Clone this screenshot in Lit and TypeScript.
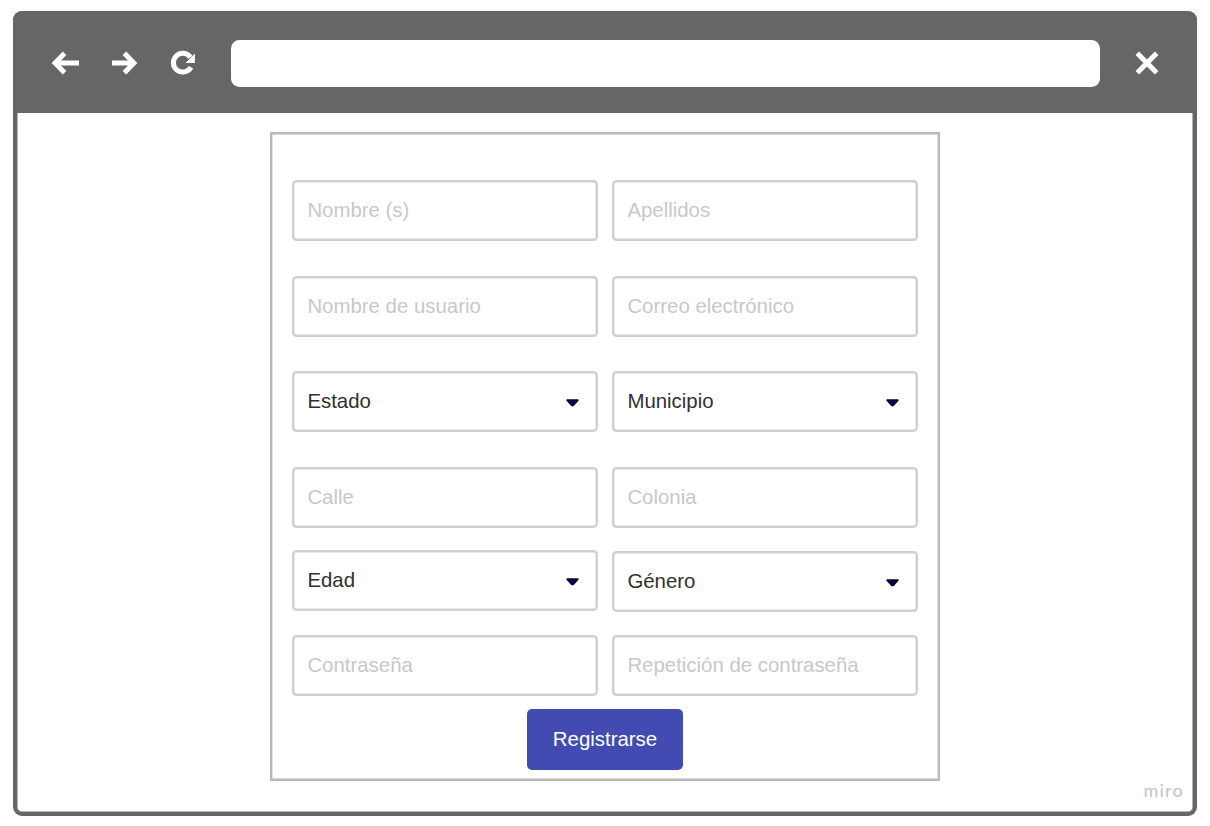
import { LitElement, html, css } from "lit";
import { customElement, property } from "lit/decorators.js";

@customElement("form-field")
class FormField extends LitElement {
  @property() label = "";
  @property({ type: Boolean }) select = false;

  static styles = css`
    :host { display: block; height: 61px; }
    .box {
      box-sizing: border-box;
      height: 100%;
      display: flex;
      align-items: center;
      justify-content: space-between;
      padding: 0 17px 2px 13.4px;
      border: 2px solid #d0d0d0;
      box-shadow: inset 0 0 0 0.5px #d0d0d0;
      border-radius: 4.5px;
      background: #fff;
      color: #c8c8c8;
    }
    .select { color: #303030; }
    .caret { display: block; margin-top: 5px; }
  `;

  render() {
    return html`<div class="box ${this.select ? "select" : ""}">
      <span>${this.label}</span>
      ${this.select
        ? html`<svg class="caret" width="13" height="8" viewBox="0 0 13 8">
            <path d="M1.2 .3H11.8Q13.2 .6 12.3 2L8 6.7Q6.5 8 5 6.7L.7 2Q-.2 .6 1.2 .3Z" fill="#050038" />
          </svg>`
        : ""}
    </div>`;
  }
}

@customElement("app-root")
class AppRoot extends LitElement {
  static styles = css`
    :host {
      display: block;
      box-sizing: border-box;
      width: 1210px;
      height: 826px;
      padding: 11px 13px 10px 13px;
      background: #fff;
      font: 20.4px/24px "Liberation Sans", Arial, sans-serif;
    }
    .window {
      box-sizing: border-box;
      height: 805px;
      display: flex;
      flex-direction: column;
      border: solid #666;
      border-width: 0 4px 4px;
      box-shadow: inset 0 0 0 0.5px #666;
      border-radius: 9px;
      background: #fff;
    }
    .bar {
      box-sizing: border-box;
      flex: none;
      height: 102px;
      margin: 0 -4px;
      padding: 1px 37px 0 38px;
      display: flex;
      align-items: center;
      background: #666;
      border-radius: 9px 9px 0 0;
    }
    .bar svg { display: block; flex: none; }
    .forward { margin-left: 33px; }
    .reload { margin-left: 31px; }
    .address {
      flex: 1;
      height: 47px;
      margin: 1px 34px 0 36px;
      border-radius: 8.5px;
      background: #fff;
    }
    .page {
      flex: 1;
      display: grid;
      grid-template-columns: 253px 670px 1fr;
      padding-top: 19px;
    }
    .card {
      grid-column: 2;
      box-sizing: border-box;
      height: 649px;
      padding: 46px 20px 0;
      border: 2px solid #b9b9b9;
      box-shadow: inset 0 0 0 0.4px #b9b9b9;
      display: flex;
      flex-direction: column;
      align-items: stretch;
    }
    .row {
      display: grid;
      grid-template-columns: 306px 306px;
      column-gap: 14px;
      margin-bottom: 35px;
    }
    .row.snug { margin-bottom: 34px; }
    .row.close { margin-bottom: 22px; }
    .row.near { margin-bottom: 24px; }
    .row.last { margin-bottom: 13px; }
    .lower { margin-top: 1px; margin-bottom: -1px; }
    .submit {
      align-self: center;
      width: 156px;
      height: 61px;
      padding: 0 0 1px;
      border: 0;
      border-radius: 5px;
      background: #424bb1;
      color: #fff;
      font: inherit;
    }
    .brand {
      align-self: end;
      justify-self: end;
      margin: 0 9px 11px 0;
      font: 500 18px/22px Lato, sans-serif;
      letter-spacing: 1.2px;
      color: #c6c6d0;
    }
  `;

  render() {
    return html`<div class="window">
      <header class="bar">
        <svg width="28" height="24" viewBox="0 0 28 24" fill="none" stroke="#fff" stroke-width="5">
          <path d="M28 12H5M13.6 2.2L4.1 12L13.6 21.8" />
        </svg>
        <svg class="forward" width="27" height="24" viewBox="0 0 27 24" fill="none" stroke="#fff" stroke-width="5">
          <path d="M0 12H22M12.4 2.2L21.9 12L12.4 21.8" />
        </svg>
        <svg class="reload" width="25" height="26" viewBox="-.4 0 25 26">
          <path d="M20.6 17.2A9.4 9.4 0 1 1 20 7.2" fill="none" stroke="#fff" stroke-width="5" />
          <path d="M24.5 3.6V13H15.2Z" fill="#fff" />
        </svg>
        <div class="address"></div>
        <svg width="26" height="24" viewBox="0 0 26 24" fill="none" stroke="#fff" stroke-width="5">
          <path d="M3.3 2.2L22.7 21.8M22.7 2.2L3.3 21.8" />
        </svg>
      </header>
      <main class="page">
        <form class="card">
          <div class="row">
            <form-field label="Nombre (s)"></form-field>
            <form-field label="Apellidos"></form-field>
          </div>
          <div class="row snug">
            <form-field label="Nombre de usuario"></form-field>
            <form-field label="Correo electrónico"></form-field>
          </div>
          <div class="row">
            <form-field label="Estado" select></form-field>
            <form-field label="Municipio" select></form-field>
          </div>
          <div class="row close">
            <form-field label="Calle"></form-field>
            <form-field label="Colonia"></form-field>
          </div>
          <div class="row near">
            <form-field label="Edad" select></form-field>
            <form-field class="lower" label="Género" select></form-field>
          </div>
          <div class="row last">
            <form-field label="Contraseña"></form-field>
            <form-field label="Repetición de contraseña"></form-field>
          </div>
          <button class="submit" type="button">Registrarse</button>
        </form>
        <span class="brand">miro</span>
      </main>
    </div>`;
  }
}
